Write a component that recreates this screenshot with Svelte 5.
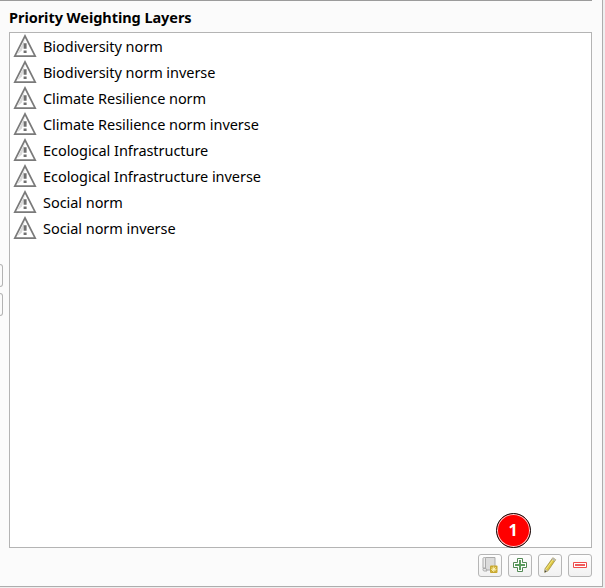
<script>
  const layers = [
    'Biodiversity norm',
    'Biodiversity norm inverse',
    'Climate Resilience norm',
    'Climate Resilience norm inverse',
    'Ecological Infrastructure',
    'Ecological Infrastructure inverse',
    'Social norm',
    'Social norm inverse'
  ];
</script>

<div class="window">
  <div class="edge"><i></i><i></i></div>
  <main>
    <h1>Priority Weighting Layers</h1>
    <ul>
      {#each layers as layer}
        <li>
          <svg width="24" height="24" viewBox="0 0 24 24">
            <path d="M12 2 22.2 22.2H1.8Z" fill="#fff" stroke="#7a7a7a" stroke-width="1.7" />
            <path d="M12 4.5 4 20.5 9 16.5Z" fill="#dadada" />
            <path d="M10.6 9.3h3v5.5h-3zM10.6 16.6h3v2.4h-3z" fill="#707070" />
          </svg>
          <span>{layer}</span>
        </li>
      {/each}
    </ul>
    <div class="actions">
      <button aria-label="Add new layer">
        <svg width="16" height="16" viewBox="0 0 16 16">
          <path d="M3.5.5H13V13H3.5Z" fill="#dcdcdc" stroke="#aaa" />
          <path d="M1 1.5C1 .2 3.5.2 3.5 1.5V11H1Z" fill="#eee" stroke="#aaa" />
          <path d="M1 11.5h3l1 2.5H2.3Q1 14 1 12.5Z" fill="#e8e8e8" stroke="#aaa" />
          <rect x="8" y="8.5" width="7.5" height="7.5" rx="1" fill="#c8a72d" />
          <path d="M11.75 9.5v5.5M9 12.25h5.5M9.8 10.3l3.9 3.9M13.7 10.3l-3.9 3.9" stroke="#fff7bc" stroke-width=".9" />
        </svg>
      </button>
      <button aria-label="Add" class="add">
        <svg width="16" height="16" viewBox="0 0 16 16">
          <path d="M5.5 1.5h5v4h4v5h-4v4h-5v-4h-4v-5h4Z" fill="#fff" stroke="#528a55" />
          <path d="M7 3h2v4h4v2H9v4H7V9H3V7h4Z" fill="#599b5c" />
        </svg>
        <b>1</b>
      </button>
      <button aria-label="Edit">
        <svg width="16" height="16" viewBox="0 0 16 16">
          <path d="M10.8.8 13.6 2.7 6 13.8 2.7 15.3 3 11.8Z" fill="#dcc540" stroke="#9c8e48" stroke-width=".8" />
          <path d="M11.3 2.3 4.1 12.2" stroke="#f4e780" />
          <path d="m10.8.8 2.8 1.9-1 1.4-2.9-1.9Z" fill="#bbb" />
          <path d="m3 11.8 3 2-3.3 1.5Z" fill="#c8c2aa" />
          <path d="m2.9 13.3 1.6 1.2-1.8.9Z" fill="#444" />
        </svg>
      </button>
      <button aria-label="Remove">
        <svg width="16" height="16" viewBox="0 0 16 16">
          <path d="M1.5 5.5h13v5h-13Z" fill="#fff" stroke="#ef4c4c" />
          <path d="M3 7h10v2H3Z" fill="#f05b5b" />
        </svg>
      </button>
    </div>
  </main>
</div>

<style>
  :global(body) { background: #efefef; overflow: hidden; }
  .window {
    box-sizing: border-box;
    width: 603px;
    height: 587px;
    display: flex;
    background: #fbfbfb;
    border-right: 1px solid #adadad;
    border-bottom: 1px solid #adadad;
    font-family: "Noto Sans", sans-serif;
    color: #000;
  }
  .edge { width: 9px; padding-top: 264px; box-sizing: border-box; }
  .edge i {
    display: block;
    box-sizing: border-box;
    width: 3px;
    height: 23px;
    margin-bottom: 6px;
    border: 1px solid #b3b3b3;
    border-left: 0;
    border-radius: 0 3px 3px 0;
  }
  main { width: 583px; display: flex; flex-direction: column; position: relative; }
  main::before { content: ""; position: absolute; top: 0; left: -9px; right: 0; height: 1px; background: #9b9b9b; }
  h1 { margin: 0; height: 32px; line-height: 34px; font-size: 14.5px; font-weight: 700; white-space: nowrap; letter-spacing: -0.05px; }
  ul {
    box-sizing: border-box;
    height: 516px;
    margin: 0;
    padding: 0 3px;
    list-style: none;
    background: #fff;
    border: 1px solid #b4b4b4;
  }
  li { display: flex; align-items: center; height: 26px; gap: 6px; font-size: 14.5px; letter-spacing: -0.05px; white-space: nowrap; }
  li svg { flex: none; }
  .actions { display: flex; justify-content: flex-end; gap: 6px; padding-top: 6px; }
  button {
    position: relative;
    box-sizing: border-box;
    width: 24px;
    height: 23px;
    padding: 0 0 1px;
    display: grid;
    place-items: center;
    border: 1px solid #b6b6b6;
    border-radius: 3px;
    background: linear-gradient(#fefefe, #f1f1f1);
  }
  button svg { display: block; }
  .add b {
    position: absolute;
    left: -13.5px;
    top: -42.5px;
    box-sizing: border-box;
    width: 35px;
    height: 35px;
    border: 1.5px solid #111;
    border-radius: 50%;
    background: #f00;
    box-shadow: inset 0 0 0 1px #ffd0d0;
    color: #fff;
    font: 700 16px/33px "Noto Sans", sans-serif;
    text-align: center;
  }
</style>
